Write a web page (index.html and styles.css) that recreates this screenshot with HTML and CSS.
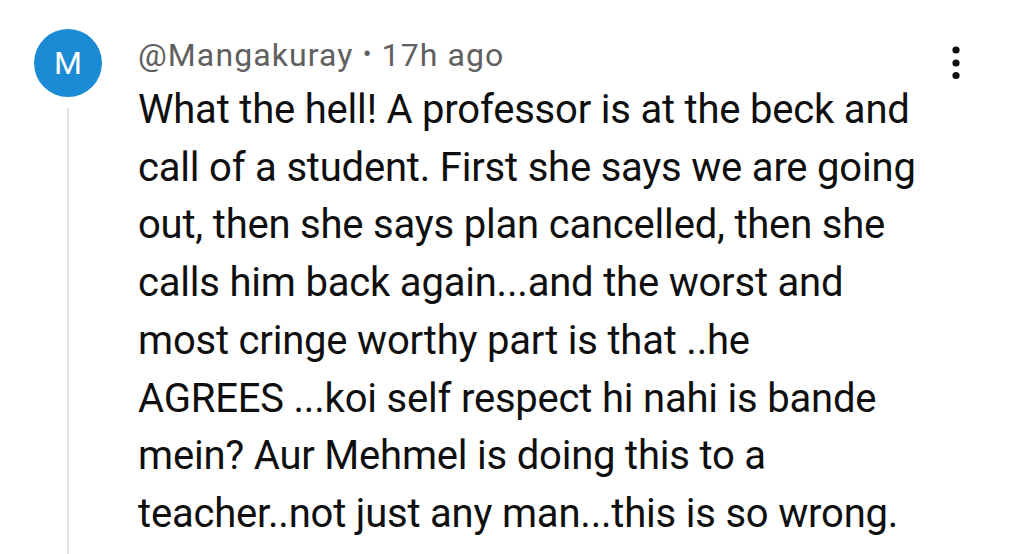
FILE: index.html
```html
<!DOCTYPE html>
<html>
<head>
<meta charset="utf-8">
<link rel="stylesheet" href="styles.css">
</head>
<body>
<div class="comment">
  <div class="left">
    <div class="avatar">M</div>
    <div class="thread"></div>
  </div>
  <div class="main">
    <div class="meta">@Mangakuray <span class="dot">•</span> 17h ago</div>
    <p class="text">What the hell! A professor is at the beck and<br>call of a student. First she says we are going<br>out, then she says plan cancelled, then she<br>calls him back again...and the worst and<br>most cringe worthy part is that ..he<br>AGREES ...koi self respect hi nahi is bande<br>mein? Aur Mehmel is doing this to a<br>teacher..not just any man...this is so wrong.</p>
  </div>
  <div class="menu">
    <svg width="12" height="40" viewBox="0 0 12 40"><circle cx="6" cy="7" r="3.6" fill="#0f0f0f"/><circle cx="6" cy="20" r="3.6" fill="#0f0f0f"/><circle cx="6" cy="32.5" r="3.6" fill="#0f0f0f"/></svg>
  </div>
</div>
</body>
</html>
```
FILE: styles.css
```css
html, body {
  margin: 0;
  padding: 0;
  background: #ffffff;
  height: 554px;
  overflow: hidden;
}
.comment {
  display: flex;
  font-family: Roboto, "Liberation Sans", sans-serif;
  padding: 29px 0 0 34px;
  height: 525px;
}
.left {
  width: 68px;
  display: flex;
  flex-direction: column;
  align-items: center;
  flex-shrink: 0;
}
.avatar {
  width: 68px;
  height: 68px;
  border-radius: 50%;
  background: #1a8ad5;
  color: #ffffff;
  font-size: 32px;
  display: flex;
  align-items: center;
  justify-content: center;
}
.thread {
  width: 2px;
  flex: 1;
  margin-top: 11px;
  background: #e2e2e2;
}
.main {
  margin-left: 36px;
  width: 790px;
  flex-shrink: 0;
}
.meta {
  font-size: 32px;
  line-height: 36px;
  letter-spacing: 1.1px;
  color: #606060;
  margin-top: 7px;
  white-space: nowrap;
}
.dot {
  font-size: 26px;
  vertical-align: 3px;
}
.text {
  margin: 8px 0 0;
  font-size: 40px;
  letter-spacing: -0.2px;
  line-height: 57.7px;
  color: #0f0f0f;
  white-space: nowrap;
}
.menu {
  margin-left: 22px;
  padding-top: 14px;
}
```
